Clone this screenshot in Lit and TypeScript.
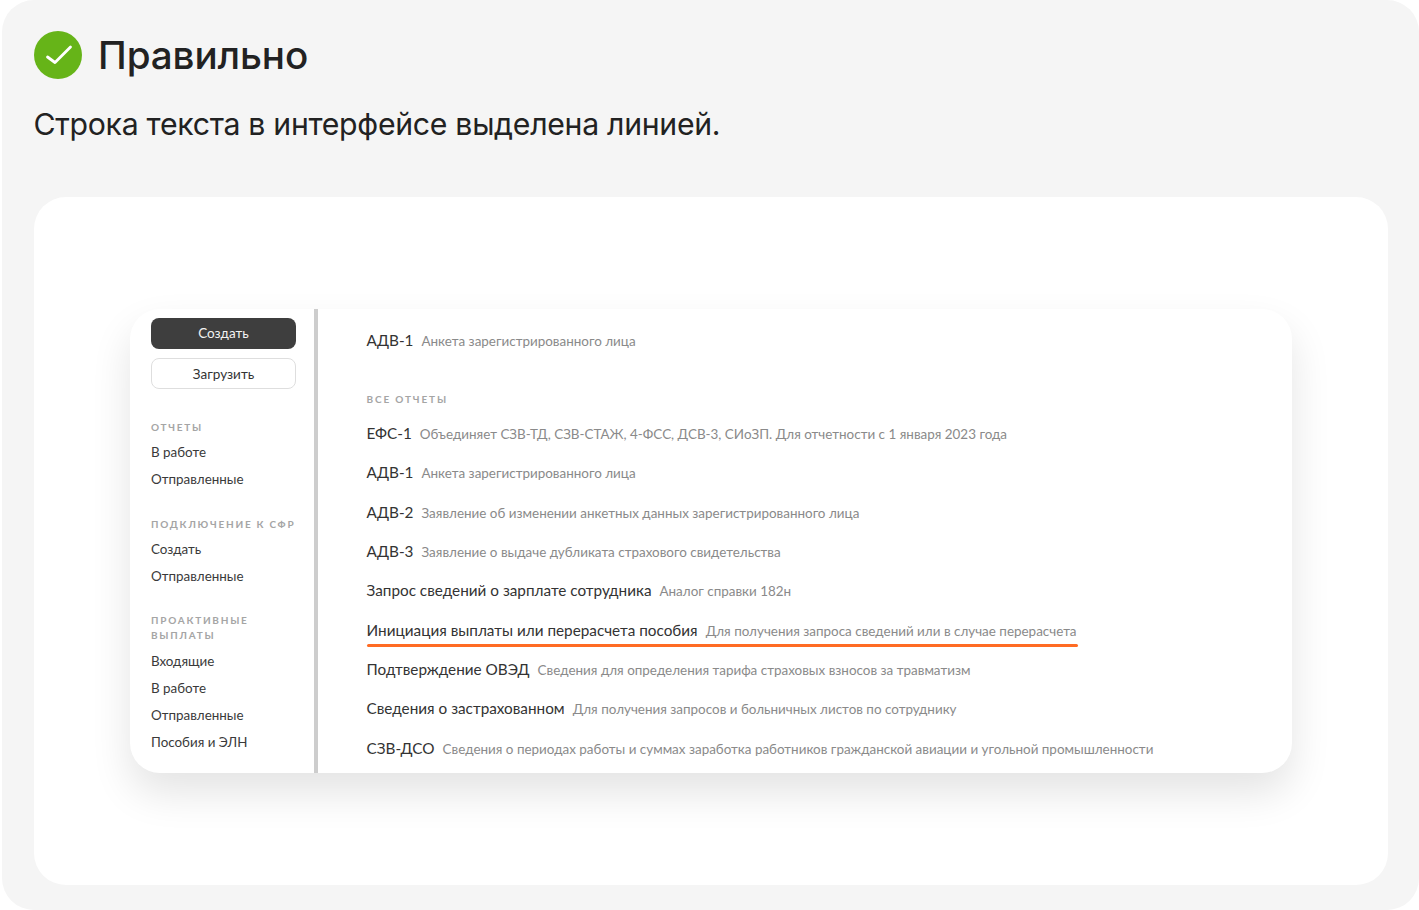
import { LitElement, html, css } from "lit";
import { customElement } from "lit/decorators.js";

const rows: [string, string, boolean?][] = [
  ["ЕФС-1", "Объединяет СЗВ-ТД, СЗВ-СТАЖ, 4-ФСС, ДСВ-3, СИоЗП. Для отчетности с 1 января 2023 года"],
  ["АДВ-1", "Анкета зарегистрированного лица"],
  ["АДВ-2", "Заявление об изменении анкетных данных зарегистрированного лица"],
  ["АДВ-3", "Заявление о выдаче дубликата страхового свидетельства"],
  ["Запрос сведений о зарплате сотрудника", "Аналог справки 182н"],
  ["Инициация выплаты или перерасчета пособия", "Для получения запроса сведений или в случае перерасчета", true],
  ["Подтверждение ОВЭД", "Сведения для определения тарифа страховых взносов за травматизм"],
  ["Сведения о застрахованном", "Для получения запросов и больничных листов по сотруднику"],
  ["СЗВ-ДСО", "Сведения о периодах работы и суммах заработка работников гражданской авиации и угольной промышленности"],
];

const groups: [string, string[]][] = [
  ["ОТЧЕТЫ", ["В работе", "Отправленные"]],
  ["ПОДКЛЮЧЕНИЕ К СФР", ["Создать", "Отправленные"]],
  ["ПРОАКТИВНЫЕ ВЫПЛАТЫ", ["Входящие", "В работе", "Отправленные", "Пособия и ЭЛН"]],
];

@customElement("app-root")
export class AppRoot extends LitElement {
  static styles = css`
    :host { display: block; width: 1419px; height: 910px; background: #fff; overflow: hidden; font-family: Inter, "Noto Sans", sans-serif; color: #222; }
    .panel { box-sizing: border-box; height: 910px; margin-left: 2px; padding: 31px 31px 25px 32px; background: #f5f5f5; border-radius: 32px; display: flex; flex-direction: column; }
    .head { display: flex; align-items: center; gap: 16px; height: 48px; }
    .head svg { display: block; flex: none; }
    h1 { margin: 0; font-size: 38.6px; line-height: 48px; font-weight: 500; letter-spacing: -0.1px; color: #222; }
    .lead { margin: 25px 0 0 -0.5px; font-size: 30.25px; line-height: 40px; font-weight: 400; letter-spacing: -0.3px; color: #222; }
    .canvas { flex: 1; margin-top: 53px; background: #fff; border-radius: 32px; padding: 112px 96px 112px 96px; box-sizing: border-box; display: flex; flex-direction: column; }
    .card { flex: 1; background: #fff; border-radius: 30px; box-shadow: 0 20px 40px rgba(0,0,0,.11); display: flex; overflow: hidden; font-family: Lato, "Open Sans", sans-serif; }
    .side { width: 184px; box-sizing: border-box; padding: 9px 14px 0 21px; flex: none; }
    .btn { box-sizing: border-box; height: 31px; width: 145px; border-radius: 8px; display: flex; align-items: center; justify-content: center; font-size: 13.5px; }
    .btn.dark { background: #3e3e3e; color: #f2f2f2; padding-bottom: 2px; }
    .btn.light { margin-top: 9px; background: #fff; border: 1px solid #dedede; color: #333; }
    .group { margin-top: 31px; }
    .group + .group { margin-top: 24px; }
    .group:last-child { margin-top: 23px; }
    .group:last-child .cap { margin-bottom: 5px; }
    .cap { font-size: 10px; line-height: 15px; font-weight: 700; letter-spacing: 1.75px; color: #a5a5a5; margin-bottom: 4px; }
    .item { font-size: 13.4px; line-height: 27px; color: #3a3a3a; }
    .divider { width: 4px; background: #cdcdcd; flex: none; }
    .main { flex: 1; padding: 19px 0 0 48.5px; min-width: 0; }
    .row { white-space: nowrap; height: 24px; line-height: 24px; display: flex; align-items: baseline; gap: 8px; }
    .row b { font-weight: 400; font-size: 15.3px; color: #333; }
    .row span { font-size: 13.45px; color: #8a8a8a; }
    .all { margin: 40px 0 15px; font-size: 10px; line-height: 14px; font-weight: 700; letter-spacing: 1.85px; color: #a5a5a5; }
    .list { display: flex; flex-direction: column; gap: 15.35px; }
    .hl { position: relative; }
    .hl::after { content: ""; position: absolute; left: 0; width: 711.5px; top: 26px; height: 3.5px; border-radius: 2px; background: #ff6b23; }
  `;

  private row(r: [string, string, boolean?]) {
    return html`<div class="row ${r[2] ? "hl" : ""}"><b>${r[0]}</b><span>${r[1]}</span></div>`;
  }

  render() {
    return html`
      <div class="panel">
        <div class="head">
          <svg width="48" height="48" viewBox="0 0 48 48" aria-hidden="true">
            <circle cx="24" cy="24" r="24" fill="#66b418"/>
            <path d="M13.5 26 L21 31.5 L36.5 16" fill="none" stroke="#fff" stroke-width="2.8" stroke-linecap="round" stroke-linejoin="round"/>
          </svg>
          <h1>Правильно</h1>
        </div>
        <p class="lead">Строка текста в интерфейсе выделена линией.</p>
        <div class="canvas">
          <div class="card">
            <div class="side">
              <div class="btn dark">Создать</div>
              <div class="btn light">Загрузить</div>
              ${groups.map(([c, items]) => html`
                <div class="group">
                  <div class="cap">${c}</div>
                  ${items.map((i) => html`<div class="item">${i}</div>`)}
                </div>`)}
            </div>
            <div class="divider"></div>
            <div class="main">
              ${this.row(["АДВ-1", "Анкета зарегистрированного лица"])}
              <div class="all">ВСЕ ОТЧЕТЫ</div>
              <div class="list">${rows.map((r) => this.row(r))}</div>
            </div>
          </div>
        </div>
      </div>
    `;
  }
}
